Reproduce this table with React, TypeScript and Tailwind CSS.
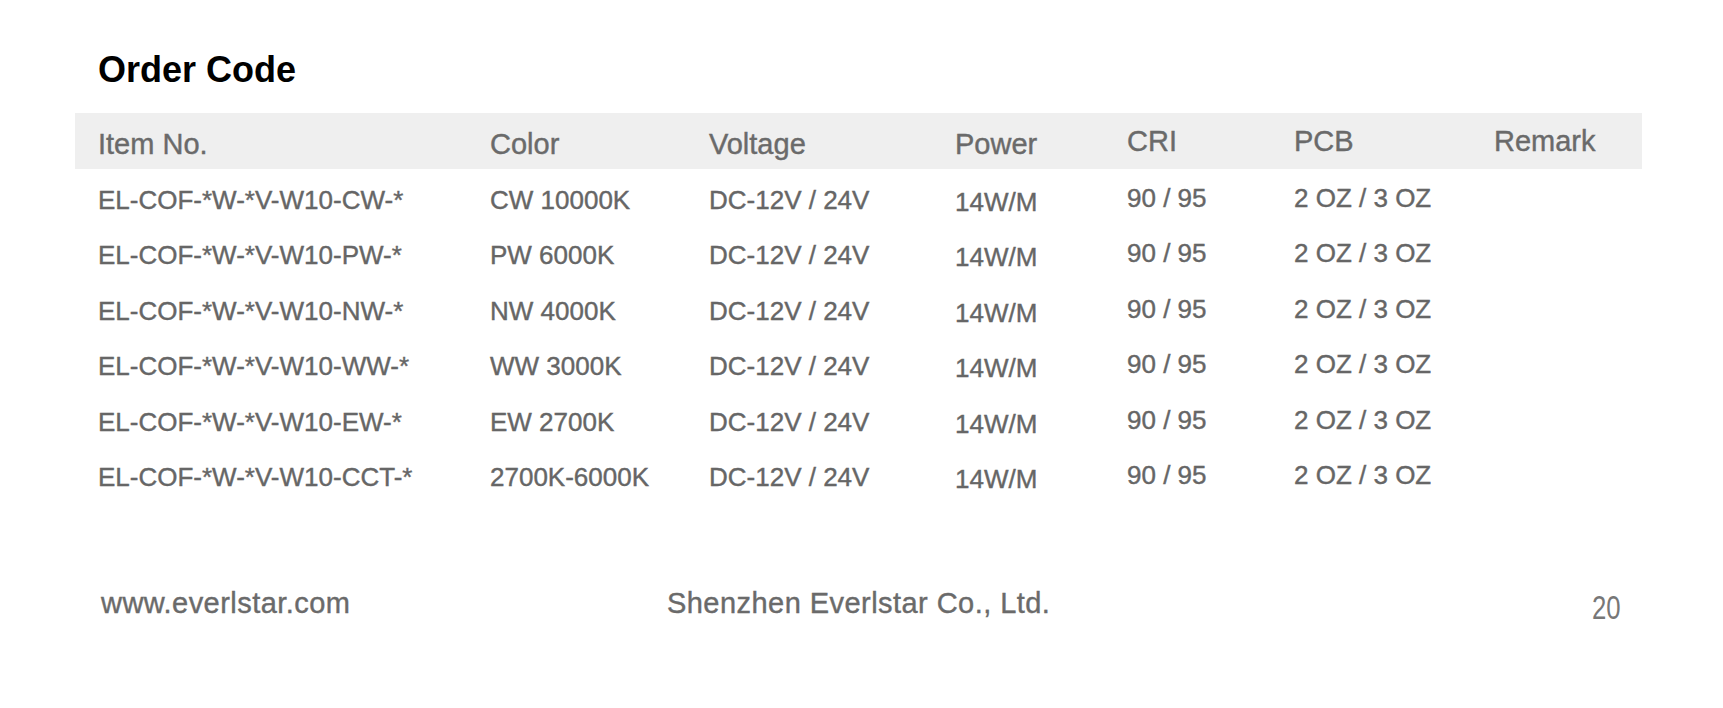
import React from "react";

const rows = [
  ["EL-COF-*W-*V-W10-CW-*", "CW 10000K"],
  ["EL-COF-*W-*V-W10-PW-*", "PW 6000K"],
  ["EL-COF-*W-*V-W10-NW-*", "NW 4000K"],
  ["EL-COF-*W-*V-W10-WW-*", "WW 3000K"],
  ["EL-COF-*W-*V-W10-EW-*", "EW 2700K"],
  ["EL-COF-*W-*V-W10-CCT-*", "2700K-6000K"],
];

const gridCols = "grid grid-cols-[392px_219px_246px_172px_167px_200px_1fr] pl-[23px]";

export default function App() {
  return (
    <div
      className="w-[1723px] h-[708px] bg-white overflow-hidden"
      style={{ fontFamily: '"Liberation Sans", Arial, sans-serif' }}
    >
      <div className="pt-[52px] pl-[98px] text-[36px] leading-[36px] font-bold text-black">
        Order Code
      </div>

      <div className="mt-[25px] ml-[75px] w-[1567px]">
        <div className={`${gridCols} h-[56px] bg-[#efefef] text-[29px] leading-[29px] text-[#6a6a6a] [-webkit-text-stroke:0.4px_#6a6a6a]`}>
          <div className="pt-[17px]">Item No.</div>
          <div className="pt-[17px]">Color</div>
          <div className="pt-[17px]">Voltage</div>
          <div className="pt-[17px]">Power</div>
          <div className="pt-[14px]">CRI</div>
          <div className="pt-[14px]">PCB</div>
          <div className="pt-[14px]">Remark</div>
        </div>

        {rows.map(([item, color]) => (
          <div
            key={item}
            className={`${gridCols} h-[55.4px] text-[26px] leading-[26px] text-[#666666] [-webkit-text-stroke:0.4px_#666666]`}
          >
            <div className="pt-[18px]">{item}</div>
            <div className="pt-[18px]">{color}</div>
            <div className="pt-[18px]">DC-12V / 24V</div>
            <div className="pt-[20px]">14W/M</div>
            <div className="pt-[16px]">90 / 95</div>
            <div className="pt-[16px]">2 OZ / 3 OZ</div>
            <div />
          </div>
        ))}
      </div>

      <div className="mt-[88px] flex items-start text-[29px] leading-[29px] tracking-[0.45px] text-[#6a6a6a] [-webkit-text-stroke:0.4px_#6a6a6a]">
        <div className="pl-[101px] w-[667px]">www.everlstar.com</div>
        <div className="w-[925px]">Shenzhen Everlstar Co., Ltd.</div>
        <div className="pt-[2px] text-[33px] leading-[33px] tracking-normal text-[#777777] [-webkit-text-stroke:0px] origin-left scale-x-[0.78]">
          20
        </div>
      </div>
    </div>
  );
}
